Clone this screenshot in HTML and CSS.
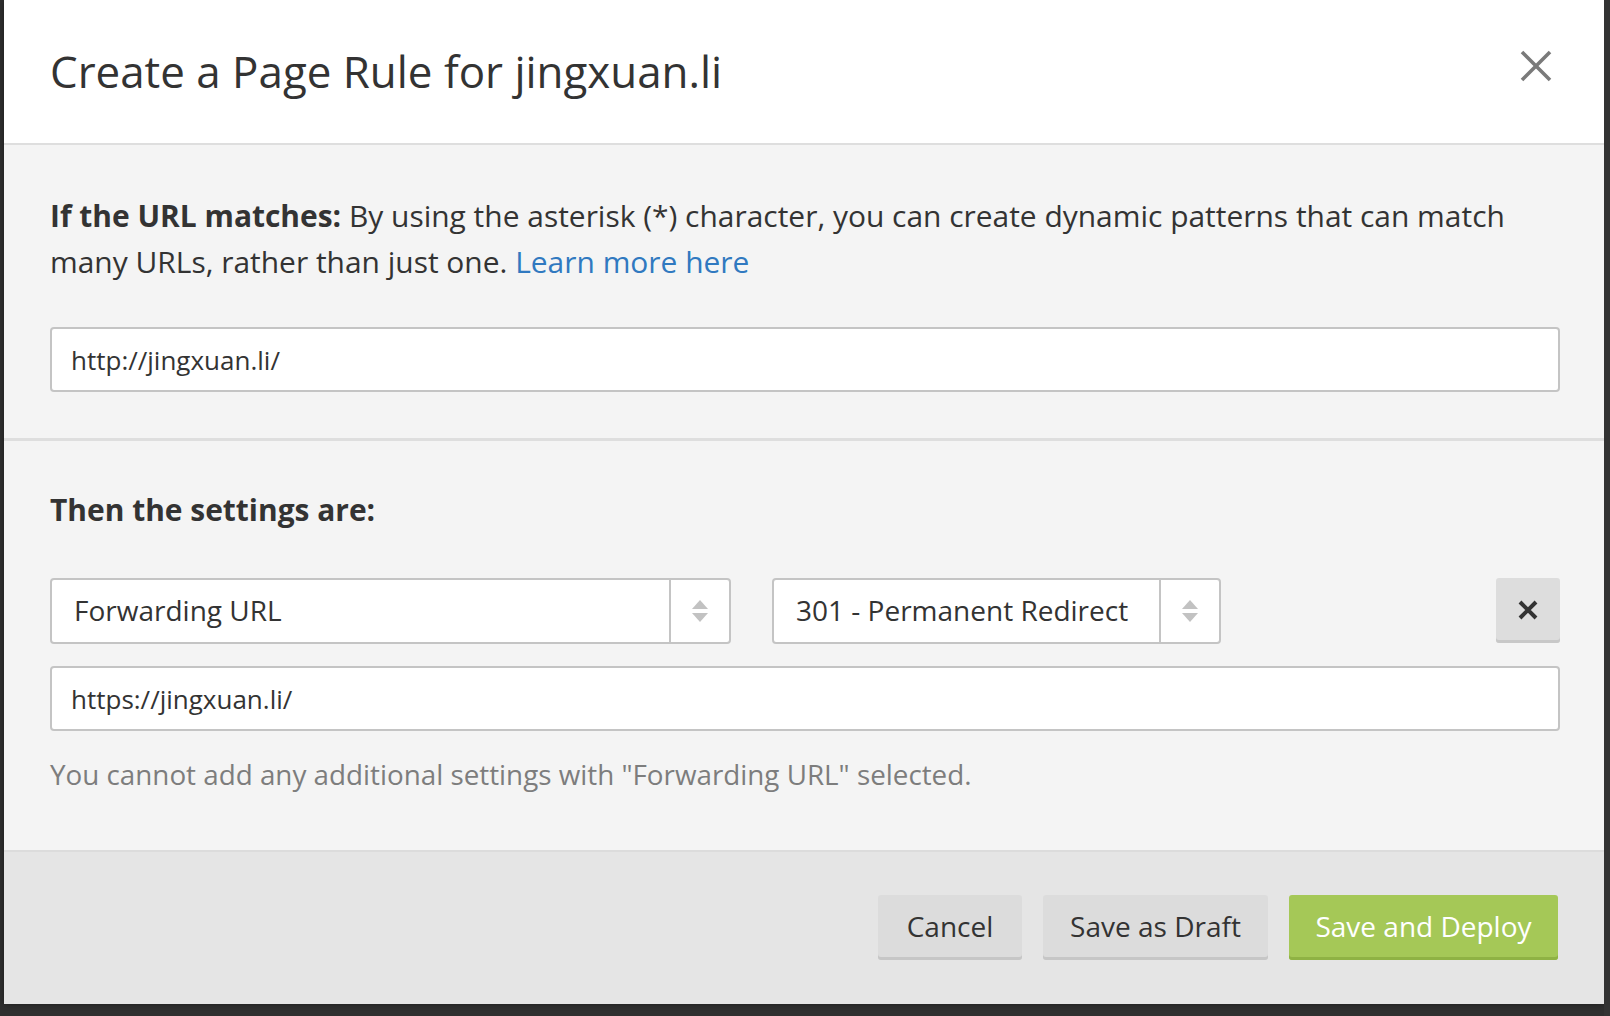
FILE: index.html
```html
<!DOCTYPE html>
<html>
<head>
<meta charset="utf-8">
<link rel="stylesheet" href="styles.css">
</head>
<body>
<div class="backdrop">
  <div class="modal">
    <div class="header">
      <h1 class="title">Create a Page Rule for jingxuan.li</h1>
      <button class="close" aria-label="Close">
        <svg width="32" height="32" viewBox="0 0 32 32"><path d="M2 2 L30 30 M30 2 L2 30" stroke="#7a7a7a" stroke-width="3.6" fill="none"/></svg>
      </button>
    </div>
    <div class="section match">
      <p class="para"><strong>If the URL matches:</strong> By using the asterisk (*) character, you can create dynamic patterns that can match many URLs, rather than just one. <a class="link" href="#">Learn more here</a></p>
      <div class="input">http://jingxuan.li/</div>
    </div>
    <div class="section settings">
      <p class="para heading"><strong>Then the settings are:</strong></p>
      <div class="row">
        <div class="select wide">
          <span class="select-text">Forwarding URL</span>
          <span class="arrows"><i class="up"></i><i class="down"></i></span>
        </div>
        <div class="select narrow">
          <span class="select-text">301 - Permanent Redirect</span>
          <span class="arrows"><i class="up"></i><i class="down"></i></span>
        </div>
        <button class="remove" aria-label="Remove">
          <svg width="22" height="22" viewBox="0 0 22 22"><path d="M3 3 L19 19 M19 3 L3 19" stroke="#333" stroke-width="4" fill="none"/></svg>
        </button>
      </div>
      <div class="input second">https://jingxuan.li/</div>
      <p class="help">You cannot add any additional settings with "Forwarding URL" selected.</p>
    </div>
    <div class="footer">
      <button class="btn cancel">Cancel</button>
      <button class="btn draft">Save as Draft</button>
      <button class="btn primary">Save and Deploy</button>
    </div>
  </div>
  <div class="side"></div>
</div>
</body>
</html>
```
FILE: styles.css
```css
html, body {
  margin: 0;
  padding: 0;
  height: 100%;
}
body {
  background: #2f2f2f;
  font-family: "Open Sans", "Noto Sans", sans-serif;
  color: #333;
  overflow: hidden;
}
.backdrop {
  display: flex;
  padding-left: 4px;
  height: 1016px;
  box-sizing: border-box;
}
.modal {
  width: 1600px;
  height: 1004px;
  background: #f4f4f4;
  display: flex;
  flex-direction: column;
  box-shadow: 0 0 6px rgba(0,0,0,0.4);
}
.side {
  flex: 1;
  background: #333;
}
.header {
  height: 143px;
  background: #fff;
  border-bottom: 2px solid #dedede;
  display: flex;
  align-items: center;
  justify-content: space-between;
  padding: 0 52px 0 46px;
  box-sizing: content-box;
}
.title {
  margin: 0;
  font-weight: 400;
  font-size: 43.9px;
  color: #333;
  padding-bottom: 2px;
}
.close {
  border: 0;
  background: transparent;
  padding: 0;
  width: 32px;
  height: 32px;
  margin-bottom: 12px;
}
.section {
  padding: 48px 44px 46px 46px;
  background: #f4f4f4;
}
.match {
  border-bottom: 3px solid #dedede;
}
.para {
  margin: 0;
  font-size: 29.95px;
  line-height: 46px;
  color: #333;
}
.para strong {
  font-weight: 700;
}
.link {
  color: #3079c0;
  text-decoration: none;
}
.input {
  margin-top: 42px;
  height: 65px;
  box-sizing: border-box;
  border: 2px solid #c4c4c4;
  border-radius: 4px;
  background: #fff;
  padding-left: 19px;
  display: flex;
  align-items: center;
  font-size: 26px;
  color: #333;
}
.settings {
  padding-top: 46px;
  padding-bottom: 52px;
  flex: 1;
}
.row {
  margin-top: 45px;
  display: flex;
  gap: 41px;
  height: 66px;
}
.select {
  display: flex;
  align-items: stretch;
  border: 2px solid #c4c4c4;
  border-radius: 4px;
  background: #fff;
  box-sizing: border-box;
}
.select.wide { width: 681px; }
.select.narrow { width: 449px; }
.select-text {
  flex: 1;
  display: flex;
  align-items: center;
  padding: 0 0 2px 22px;
  font-size: 28px;
  color: #333;
}
.arrows {
  width: 58px;
  border-left: 2px solid #c4c4c4;
  display: flex;
  flex-direction: column;
  align-items: center;
  justify-content: center;
  gap: 4px;
}
.arrows i {
  display: block;
  width: 0;
  height: 0;
  border-left: 8px solid transparent;
  border-right: 8px solid transparent;
}
.arrows .up { border-bottom: 9px solid #c2c2c2; }
.arrows .down { border-top: 9px solid #c2c2c2; }
.remove {
  margin-left: auto;
  width: 64px;
  height: 65px;
  border: 0;
  border-radius: 3px;
  background: #dddddd;
  box-shadow: inset 0 -3px 0 #c8c8c8;
  display: flex;
  align-items: center;
  justify-content: center;
  padding: 0 0 2px 0;
}
.input.second {
  margin-top: 22px;
}
.help {
  margin: 20px 0 0 0;
  font-size: 27.8px;
  line-height: 46px;
  color: #7d7d7d;
}
.footer {
  height: 154px;
  box-sizing: border-box;
  background: #e5e5e5;
  border-top: 2px solid #dcdcdc;
  display: flex;
  justify-content: flex-end;
  align-items: flex-start;
  gap: 21px;
  padding: 43px 46px 0 0;
}
.btn {
  height: 65px;
  border: 0;
  border-radius: 3px;
  background: #dcdcdc;
  box-shadow: inset 0 -3px 0 #c6c6c6;
  font-family: "Open Sans", "Noto Sans", sans-serif;
  font-size: 28px;
  color: #333;
  padding: 0 0 3px 0;
}
.btn.cancel { width: 144px; }
.btn.draft { width: 225px; }
.btn.primary {
  width: 269px;
  background: #a5c857;
  box-shadow: inset 0 -3px 0 #8fb244;
  color: #fff;
}
```
